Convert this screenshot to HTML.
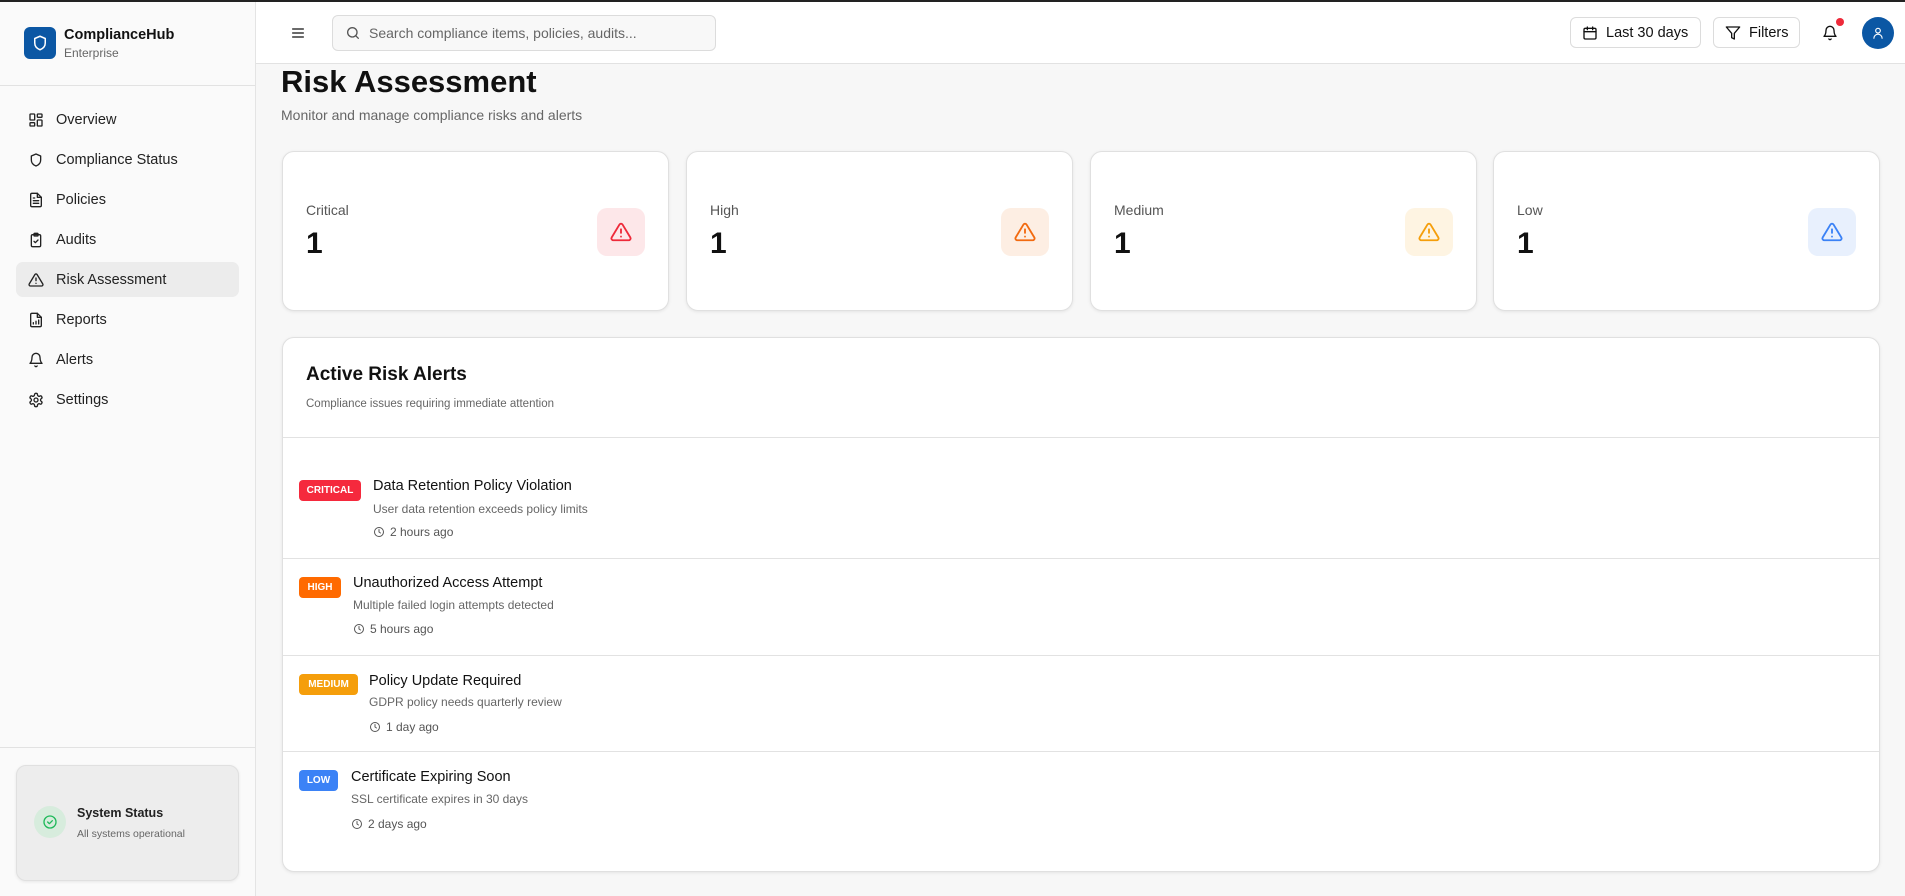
<!DOCTYPE html>
<html><head><meta charset="utf-8"><style>
*{box-sizing:border-box;margin:0;padding:0}
body{width:1905px;height:896px;overflow:hidden;background:#f7f7f7;font-family:"Liberation Sans",sans-serif;color:#111;position:relative}
.topline{position:absolute;left:0;top:0;width:1905px;height:2px;background:#222;z-index:5}
.sb{position:absolute;left:0;top:0;width:256px;height:896px;background:#fafafa;border-right:1px solid #e4e4e4}
.abs{position:absolute}
.logo{left:24px;top:27px;width:32px;height:32px;background:#0b57a4;border-radius:6px;display:flex;align-items:center;justify-content:center}
.nav{position:absolute;left:16px;width:223px;height:35px;border-radius:7px;display:flex;align-items:center;font-size:14.5px;color:#222}
.nav svg{position:absolute;left:12px}
.nav span{position:absolute;left:40px}
.nav.act{background:#ececec}
svg{fill:none;stroke:currentColor;stroke-width:2;stroke-linecap:round;stroke-linejoin:round}
.hdr{position:absolute;left:256px;top:0;right:0;height:64px;background:#fff;border-bottom:1px solid #e2e2e2}
.btn{position:absolute;top:17px;height:31px;border:1px solid #dcdcdc;border-radius:6px;background:#fff;display:flex;align-items:center;font-size:14.5px;color:#111}
.card{position:absolute;top:151px;width:387px;height:160px;background:#fff;border:1px solid #e0e0e0;border-radius:12px;box-shadow:0 1px 3px rgba(0,0,0,.08)}
.card .l{position:absolute;left:23px;top:50px;font-size:14px;color:#555}
.card .n{position:absolute;left:23px;top:75px;font-size:30px;font-weight:bold}
.card .ic{position:absolute;left:314px;top:56px;width:48px;height:48px;border-radius:10px;display:flex;align-items:center;justify-content:center}
.panel{position:absolute;left:282px;top:337px;width:1598px;height:535px;background:#fff;border:1px solid #e0e0e0;border-radius:12px;box-shadow:0 1px 3px rgba(0,0,0,.08)}
.badge{position:absolute;left:16px;height:21px;border-radius:4px;color:#fff;font-size:10px;font-weight:bold;display:flex;align-items:center;justify-content:center}
.t{position:absolute;font-size:14.5px;color:#111}
.d{position:absolute;font-size:12px;color:#666}
.tm{position:absolute;font-size:12px;color:#555;display:flex;align-items:center;gap:5px}
.sep{position:absolute;left:0;right:0;height:1px;background:#e2e2e2}
</style></head><body>
<div class="topline"></div>
<div class="sb">
 <div class="abs logo"><svg width="18" height="18" viewBox="0 0 24 24" style="color:#fff"><path d="M12 3l7 3v6c0 4.5-3 7.5-7 9-4-1.5-7-4.5-7-9V6z"/></svg></div>
 <div class="abs" style="left:64px;top:27px;font-size:14.5px;font-weight:bold">ComplianceHub</div>
 <div class="abs" style="left:64px;top:46px;font-size:12px;color:#666">Enterprise</div>
 <div class="abs" style="left:0;top:85px;width:255px;height:1px;background:#e2e2e2"></div>
 <div class="nav" style="top:102px"><svg width="16" height="16" viewBox="0 0 24 24"><rect x="3" y="3" width="7" height="9" rx="1"/><rect x="14" y="3" width="7" height="5" rx="1"/><rect x="14" y="12" width="7" height="9" rx="1"/><rect x="3" y="16" width="7" height="5" rx="1"/></svg><span>Overview</span></div>
 <div class="nav" style="top:142px"><svg width="16" height="16" viewBox="0 0 24 24"><path d="M12 3l7 3v6c0 4.5-3 7.5-7 9-4-1.5-7-4.5-7-9V6z"/></svg><span>Compliance Status</span></div>
 <div class="nav" style="top:182px"><svg width="16" height="16" viewBox="0 0 24 24"><path d="M14 2H6a2 2 0 0 0-2 2v16a2 2 0 0 0 2 2h12a2 2 0 0 0 2-2V8z"/><path d="M14 2v6h6M8 13h8M8 17h8M8 9h2"/></svg><span>Policies</span></div>
 <div class="nav" style="top:222px"><svg width="16" height="16" viewBox="0 0 24 24"><rect x="5" y="4" width="14" height="18" rx="2"/><rect x="9" y="2" width="6" height="4" rx="1"/><path d="M9 14l2 2 4-4"/></svg><span>Audits</span></div>
 <div class="nav act" style="top:262px"><svg width="16" height="16" viewBox="0 0 24 24"><path d="M10.3 3.9L1.8 18a2 2 0 0 0 1.7 3h17a2 2 0 0 0 1.7-3L13.7 3.9a2 2 0 0 0-3.4 0z"/><path d="M12 9v4M12 17h.01"/></svg><span>Risk Assessment</span></div>
 <div class="nav" style="top:302px"><svg width="16" height="16" viewBox="0 0 24 24"><path d="M14 2H6a2 2 0 0 0-2 2v16a2 2 0 0 0 2 2h12a2 2 0 0 0 2-2V8z"/><path d="M14 2v6h6M8 18v-2M12 18v-4M16 18v-6"/></svg><span>Reports</span></div>
 <div class="nav" style="top:342px"><svg width="16" height="16" viewBox="0 0 24 24"><path d="M6 8a6 6 0 0 1 12 0c0 7 3 9 3 9H3s3-2 3-9M10.3 21a1.9 1.9 0 0 0 3.4 0"/></svg><span>Alerts</span></div>
 <div class="nav" style="top:382px"><svg width="16" height="16" viewBox="0 0 24 24"><circle cx="12" cy="12" r="3"/><path d="M12.2 2h-.4a2 2 0 0 0-2 2v.2a2 2 0 0 1-1 1.7l-.4.3a2 2 0 0 1-2 0l-.2-.1a2 2 0 0 0-2.7.7l-.2.4a2 2 0 0 0 .7 2.7l.2.1a2 2 0 0 1 1 1.7v.5a2 2 0 0 1-1 1.8l-.2.1a2 2 0 0 0-.7 2.7l.2.4a2 2 0 0 0 2.7.7l.2-.1a2 2 0 0 1 2 0l.4.3a2 2 0 0 1 1 1.7v.2a2 2 0 0 0 2 2h.4a2 2 0 0 0 2-2v-.2a2 2 0 0 1 1-1.7l.4-.3a2 2 0 0 1 2 0l.2.1a2 2 0 0 0 2.7-.7l.2-.4a2 2 0 0 0-.7-2.7l-.2-.1a2 2 0 0 1-1-1.8v-.5a2 2 0 0 1 1-1.7l.2-.1a2 2 0 0 0 .7-2.7l-.2-.4a2 2 0 0 0-2.7-.7l-.2.1a2 2 0 0 1-2 0l-.4-.3a2 2 0 0 1-1-1.7V4a2 2 0 0 0-2-2z"/></svg><span>Settings</span></div>
 <div class="abs" style="left:0;top:747px;width:255px;height:1px;background:#e2e2e2"></div>
 <div class="abs" style="left:16px;top:765px;width:223px;height:116px;background:#ededed;border:1px solid #e0e0e0;border-radius:10px;box-shadow:0 1px 3px rgba(0,0,0,.08)">
  <div class="abs" style="left:17px;top:40px;width:32px;height:32px;border-radius:50%;background:#d7ecdd;display:flex;align-items:center;justify-content:center"><svg width="16" height="16" viewBox="0 0 24 24" style="color:#1fb95a"><circle cx="12" cy="12" r="9"/><path d="M8.5 12l2.5 2.5 4.5-4.5"/></svg></div>
  <div class="abs" style="left:60px;top:40px;font-size:12.5px;font-weight:bold;color:#222">System Status</div>
  <div class="abs" style="left:60px;top:62px;font-size:10.5px;color:#666">All systems operational</div>
 </div>
</div>
<div class="hdr">
 <svg class="abs" style="left:34px;top:25px" width="16" height="16" viewBox="0 0 24 24"><path d="M4 6h16M4 12h16M4 18h16"/></svg>
 <div class="abs" style="left:76px;top:15px;width:384px;height:36px;border:1px solid #dcdcdc;border-radius:6px;background:#f8f8f8">
  <svg class="abs" style="left:12px;top:9px;color:#555" width="16" height="16" viewBox="0 0 24 24"><circle cx="11" cy="11" r="7"/><path d="M20 20l-4-4"/></svg>
  <div class="abs" style="left:36px;top:9px;font-size:14px;color:#666">Search compliance items, policies, audits...</div>
 </div>
 <div class="btn" style="left:1314px;width:131px"><svg class="abs" style="left:11px" width="16" height="16" viewBox="0 0 24 24"><rect x="3" y="5" width="18" height="16" rx="2"/><path d="M16 3v4M8 3v4M3 10h18"/></svg><span style="position:absolute;left:35px">Last 30 days</span></div>
 <div class="btn" style="left:1457px;width:87px"><svg class="abs" style="left:11px" width="16" height="16" viewBox="0 0 24 24"><path d="M22 3H2l8 9.5V19l4 2v-8.5z"/></svg><span style="position:absolute;left:35px">Filters</span></div>
 <svg class="abs" style="left:1566px;top:25px" width="16" height="16" viewBox="0 0 24 24"><path d="M6 8a6 6 0 0 1 12 0c0 7 3 9 3 9H3s3-2 3-9M10.3 21a1.9 1.9 0 0 0 3.4 0"/></svg>
 <div class="abs" style="left:1580px;top:18px;width:8px;height:8px;border-radius:50%;background:#ee2a3a"></div>
 <div class="abs" style="left:1606px;top:17px;width:32px;height:32px;border-radius:50%;background:#0b57a4;display:flex;align-items:center;justify-content:center"><svg width="14" height="14" viewBox="0 0 24 24" style="color:#fff"><circle cx="12" cy="8" r="4"/><path d="M5 21a7 7 0 0 1 14 0"/></svg></div>
</div>
<div class="abs" style="left:281px;top:64px;font-size:31px;font-weight:bold;color:#111">Risk Assessment</div>
<div class="abs" style="left:281px;top:107px;font-size:14px;color:#666">Monitor and manage compliance risks and alerts</div>

<div class="card" style="left:282px"><div class="l">Critical</div><div class="n">1</div><div class="ic" style="background:#fde7e9;color:#ee2a3a"><svg width="22" height="22" viewBox="0 0 24 24"><path d="M10.3 3.9L1.8 18a2 2 0 0 0 1.7 3h17a2 2 0 0 0 1.7-3L13.7 3.9a2 2 0 0 0-3.4 0z"/><path d="M12 9v4M12 17h.01"/></svg></div></div>
<div class="card" style="left:686px"><div class="l">High</div><div class="n">1</div><div class="ic" style="background:#fdeee3;color:#f26a10"><svg width="22" height="22" viewBox="0 0 24 24"><path d="M10.3 3.9L1.8 18a2 2 0 0 0 1.7 3h17a2 2 0 0 0 1.7-3L13.7 3.9a2 2 0 0 0-3.4 0z"/><path d="M12 9v4M12 17h.01"/></svg></div></div>
<div class="card" style="left:1090px"><div class="l">Medium</div><div class="n">1</div><div class="ic" style="background:#fef4e2;color:#f59e0b"><svg width="22" height="22" viewBox="0 0 24 24"><path d="M10.3 3.9L1.8 18a2 2 0 0 0 1.7 3h17a2 2 0 0 0 1.7-3L13.7 3.9a2 2 0 0 0-3.4 0z"/><path d="M12 9v4M12 17h.01"/></svg></div></div>
<div class="card" style="left:1493px"><div class="l">Low</div><div class="n">1</div><div class="ic" style="background:#e8f0fd;color:#3b82f6"><svg width="22" height="22" viewBox="0 0 24 24"><path d="M10.3 3.9L1.8 18a2 2 0 0 0 1.7 3h17a2 2 0 0 0 1.7-3L13.7 3.9a2 2 0 0 0-3.4 0z"/><path d="M12 9v4M12 17h.01"/></svg></div></div>

<div class="panel">
 <div class="abs" style="left:23px;top:26px;font-size:19px;font-weight:bold">Active Risk Alerts</div>
 <div class="abs" style="left:23px;top:60px;font-size:11.5px;color:#666">Compliance issues requiring immediate attention</div>
 <div class="sep" style="top:99px"></div>

 <div class="badge" style="top:142px;width:62px;background:#f5293d">CRITICAL</div>
 <div class="t" style="left:90px;top:140px">Data Retention Policy Violation</div>
 <div class="d" style="left:90px;top:164px">User data retention exceeds policy limits</div>
 <div class="tm" style="left:90px;top:187px"><svg width="12" height="12" viewBox="0 0 24 24"><circle cx="12" cy="12" r="9"/><path d="M12 7v5l3 2"/></svg>2 hours ago</div>
 <div class="sep" style="top:220px"></div>

 <div class="badge" style="top:239px;width:42px;background:#ff6a00">HIGH</div>
 <div class="t" style="left:70px;top:237px">Unauthorized Access Attempt</div>
 <div class="d" style="left:70px;top:260px">Multiple failed login attempts detected</div>
 <div class="tm" style="left:70px;top:284px"><svg width="12" height="12" viewBox="0 0 24 24"><circle cx="12" cy="12" r="9"/><path d="M12 7v5l3 2"/></svg>5 hours ago</div>
 <div class="sep" style="top:317px"></div>

 <div class="badge" style="top:336px;width:59px;background:#f59e0b">MEDIUM</div>
 <div class="t" style="left:86px;top:335px">Policy Update Required</div>
 <div class="d" style="left:86px;top:357px">GDPR policy needs quarterly review</div>
 <div class="tm" style="left:86px;top:382px"><svg width="12" height="12" viewBox="0 0 24 24"><circle cx="12" cy="12" r="9"/><path d="M12 7v5l3 2"/></svg>1 day ago</div>
 <div class="sep" style="top:413px"></div>

 <div class="badge" style="top:432px;width:39px;background:#3b82f6">LOW</div>
 <div class="t" style="left:68px;top:431px">Certificate Expiring Soon</div>
 <div class="d" style="left:68px;top:454px">SSL certificate expires in 30 days</div>
 <div class="tm" style="left:68px;top:479px"><svg width="12" height="12" viewBox="0 0 24 24"><circle cx="12" cy="12" r="9"/><path d="M12 7v5l3 2"/></svg>2 days ago</div>
</div>
</body></html>
